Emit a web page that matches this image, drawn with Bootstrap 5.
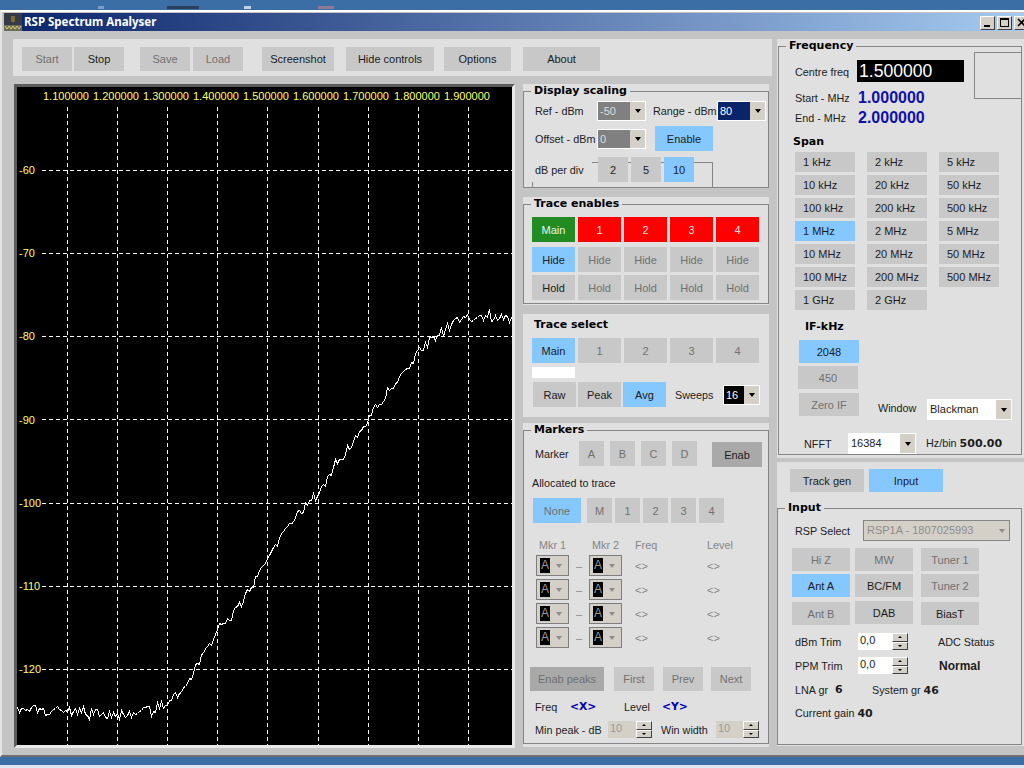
<!DOCTYPE html>
<html lang="en">
<head>
<meta charset="utf-8">
<title>RSP Spectrum Analyser</title>
<link href="https://cdn.jsdelivr.net/npm/bootstrap@5.3.0/dist/css/bootstrap.min.css" rel="stylesheet">
<style>
html,body{margin:0;height:768px;overflow:hidden}
body{background:#3a6ea5;font:11px/14px "Liberation Sans",Arial,sans-serif;color:#1c1c1c}
.deskstrip{height:10px}
.dk{height:3px;margin-top:6px}
.dk1{margin-left:98px;width:6px;background:#7f9fc4}
.dk2{margin-left:63px;width:32px;background:#2a3f5c}
.dk3{margin-left:45px;width:7px;background:#c3d3e4}
.dk4{margin-left:67px;width:16px;background:#8f7a90}
.winbox{height:747px;background:#c4c4c4;border-top:2px solid #fff;border-bottom:2px solid #6f6f6f;border-left:2px solid #e4e4e4;padding-top:1px}
.tbarhead{height:18px;margin-left:2px;background:linear-gradient(90deg,#0a246a,#a6caf0);color:#fff;font:bold 11.5px/18px "Noto Sans",sans-serif;overflow:hidden}
.appic{width:18px;height:18px;margin-right:2px;flex:none}
.wb{width:15px;height:14px;background:#d4d0c8;border:1px solid;border-color:#fff #404040 #404040 #fff;flex:none;margin-right:2px;position:relative}
.wbmin::after{content:"";position:absolute;left:3px;bottom:2px;width:6px;height:2px;background:#000}
.wbmax::after{content:"";position:absolute;left:2px;top:1px;width:9px;height:9px;border:1px solid #000;border-top-width:2px}
.wins{padding-top:1px;margin-right:-7px}
.maincols{padding-top:8px}
.lcol{width:759px;margin-left:11px;flex:none}
.rcol{width:247px;margin-left:5px;flex:none}
.pane{background:#e0e0e0;display:flow-root}
.tool{height:37px;padding:8px 0 0 9px}
.chartbox{width:501px;height:664px;margin-left:1px;border:3px solid;border-color:#5c5c5c #e8e8e8 #e8e8e8 #5c5c5c;background:#000;flex:none}
.chartbox svg{display:block}
.midc{width:246px;margin-left:8px;flex:none}
.gb{border:1px solid #858585;padding:0;margin:0;min-width:0}
.gb>legend{float:none;width:auto;margin:0 0 0 7px;padding:0 3px;font:bold 11px/14px "DejaVu Sans",sans-serif;color:#000}
.ttl{font:bold 11px/14px "DejaVu Sans",sans-serif;color:#000}
.btn.kb{--bs-btn-padding-x:0;--bs-btn-padding-y:0;--bs-btn-border-width:0;--bs-btn-border-radius:0;--bs-btn-font-size:11px;--bs-btn-line-height:14px;--bs-btn-font-family:"Liberation Sans",Arial,sans-serif;--bs-btn-bg:#c8c8c8;--bs-btn-color:#1c1c1c;--bs-btn-hover-bg:#c8c8c8;--bs-btn-hover-color:#1c1c1c;flex:none;display:block}
.btn.kb.dim{--bs-btn-color:#707070;--bs-btn-hover-color:#707070}
.btn.kb.sky{--bs-btn-bg:#85c8ff;--bs-btn-hover-bg:#85c8ff}
.btn.kb.dark{--bs-btn-bg:#a9a9a9;--bs-btn-hover-bg:#a9a9a9}
.btn.kb.grn{--bs-btn-bg:#228b22;--bs-btn-hover-bg:#228b22;--bs-btn-color:#eaf5ea;--bs-btn-hover-color:#eaf5ea}
.btn.kb.redb{--bs-btn-bg:#ff0000;--bs-btn-hover-bg:#ff0000;--bs-btn-color:#ffe0e0;--bs-btn-hover-color:#ffe0e0}
.btn.kb.tl{text-align:left;padding-left:8px}
.h17{height:17px}.h20{height:20px}.h21{height:21px}.h23{height:23px}.h24{height:24px}.h25{height:25px}
.h14{height:14px}.h16{height:16px}
.w25{width:25px}.w30{width:30px}.w35{width:35px}.w37{width:37px}.w38{width:38px}.w40{width:40px}.w43{width:43px}.w44{width:44px}.w48{width:48px}.w49{width:49px}.w50{width:50px}.w54{width:54px}.w55{width:55px}.w58{width:58px}.w60{width:60px}.w62{width:62px}.w63{width:63px}.w64{width:64px}.w67{width:67px}.w68{width:68px}.w72{width:72px}.w73{width:73px}.w74{width:74px}.w77{width:77px}.w85{width:85px}.w88{width:88px}.w107{width:107px}.w147{width:147px}
.l1{margin-left:1px}.l2{margin-left:2px}.l3{margin-left:3px}.l5{margin-left:5px}.l6{margin-left:6px}.l7{margin-left:7px}.l8{margin-left:8px}.l9{margin-left:9px}.l10{margin-left:10px}.l11{margin-left:11px}.l12{margin-left:12px}.l13{margin-left:13px}.l14{margin-left:14px}.l15{margin-left:15px}.l16{margin-left:16px}.l17{margin-left:17px}.l19{margin-left:19px}.l20{margin-left:20px}.l25{margin-left:25px}.l26{margin-left:26px}.l30{margin-left:30px}.l31{margin-left:31px}
.t1{margin-top:1px}.t2{margin-top:2px}.t3{margin-top:3px}.t4{margin-top:4px}.t5{margin-top:5px}.t6{margin-top:6px}.t7{margin-top:7px}.t8{margin-top:8px}.t9{margin-top:9px}.t10{margin-top:10px}.t13{margin-top:13px}.t15{margin-top:15px}.t19{margin-top:19px}
.ht104{height:104px}.ht107{height:107px}.ht103{height:103px}.ht324{height:324px}.ht321{height:321px}
.pt108{height:108px}
.fq419{height:419px}.fq416{height:416px}.in284{height:284px}.in244{height:244px}
.fl{width:244px;margin-left:1px}
.fin{width:245px}
.lb{flex:none;white-space:nowrap;font-size:10.8px}
.mut{color:#858585}
.combo{border:1px solid #fff;display:flex;flex:none;background:#d4d0c8}
.cf{flex:1;padding-left:2px;line-height:18px;color:#fff;overflow:hidden;white-space:nowrap}
.cf.gy{background:#808080;color:#dedede}
.cf.nv{background:#0a246a}
.cf.bk{background:#000}
.cf.wt{background:#fff;color:#1c1c1c}
.ca{width:15px;flex:none;display:flex;align-items:center;justify-content:center;background:#d4d0c8}
.ca::after{content:"";border:3.5px solid transparent;border-top:4px solid #000;border-bottom:0}
.combo.rsp{border-color:#858585}
.rsp .cf{color:#8c8c8c;background:#d4d0c8;line-height:19px;padding-left:3px}
.rsp .ca::after{border-top-color:#8c8c8c}
.mk{border:1px solid #7d7d7d;background:#d4d0c8;width:33px;height:21px;display:flex;align-items:center;padding-left:3px}
.mkf{width:10px;height:15px;background:#000;color:#9a9a9a;line-height:15px;text-align:center;font-size:12px}
.mk .ca{flex:1;background:none}
.mk .ca::after{border-top-color:#8c8c8c}
.inn{position:absolute;z-index:0;border:0 solid #858585}
.boxl{left:68px;top:5px;width:121px;height:26px;border-width:1px 1px 0 0}
.boxs{left:8px;top:25px;width:1px;height:6px;background:#858585}
.rel{position:relative}
.rel>.btn,.rel>.lb{position:relative;z-index:1}
.wht{width:43px;height:11px;background:#fff}
.lb.blk{font-size:17.6px;line-height:22px;background:#000;color:#fff;padding-left:2px}
.mhz{font:bold 16px/16px "Liberation Sans",Arial,sans-serif;color:#1010a8}
.cbx{width:48px;height:47px;border:1px solid #858585;margin-top:-1px;margin-right:-1px;flex:none}
.spang{display:grid;grid-template-columns:repeat(3,60px);grid-auto-rows:20px;column-gap:12px;row-gap:3px}
.tgrid{display:grid;grid-template-columns:repeat(5,43px);grid-auto-rows:25px;column-gap:3px;row-gap:5px}
.mgrid{display:grid;grid-template-columns:33px 20px 33px 13px 72px 50px;grid-template-rows:14px repeat(4,21px);row-gap:3px;align-items:center}
.ctr{text-align:center}
.spin{display:flex;flex:none}
.spf{flex:1;background:#d4d0c8;color:#9a9a9a;padding-left:2px;line-height:15px}
.spf.on{background:#fff;color:#1c1c1c}
.spb{width:16px;display:flex;flex-direction:column;flex:none}
.spb>i{flex:1;background:#d4d0c8;border:1px solid;border-color:#fff #404040 #404040 #fff;display:flex;align-items:center;justify-content:center}
.spb>i::after{content:"";border:2px solid transparent}
.spb>i.u::after{border-bottom:2px solid #000;border-top:0}
.spb>i.d::after{border-top:2px solid #000;border-bottom:0}
.blu{color:#0000b4;font-weight:bold;font-family:"DejaVu Sans",sans-serif}
.bo{font-weight:bold;font-size:12px}
.boo{font-weight:bold;font-family:"DejaVu Sans",sans-serif;font-size:11px}
.foot{height:8px}
.footb{height:3px;background:#dfe6ee}
</style>
</head>
<body>
<div class="deskstrip d-flex">
  <span class="dk dk1"></span><span class="dk dk2"></span><span class="dk dk3"></span><span class="dk dk4"></span>
</div>
<div class="winbox">
  <div class="tbarhead d-flex align-items-center">
    <svg class="appic" viewBox="0 0 18 18"><rect width="18" height="18" fill="#353a44"/><rect x="7" y="3" width="4" height="6" fill="#7b6a3a"/><rect y="12" width="18" height="6" fill="#6c6c58"/><path d="M1 13l2 3 2-3 2 3 2-3 2 3 2-3 2 3 2-3" fill="none" stroke="#d8cc70"/></svg>
    <span class="flex-grow-1">RSP Spectrum Analyser</span>
    <span class="d-flex wins"><span class="wb wbmin"></span><span class="wb wbmax"></span><svg class="wb" viewBox="0 0 13 12"><path d="M3 2l7 7M10 2l-7 7" stroke="#000" stroke-width="1.6"/></svg></span>
  </div>
  <div class="maincols d-flex">
    <div class="lcol">
      <div class="pane tool d-flex">
        <button class="btn kb dim w50 h24">Start</button>
        <button class="btn kb w50 h24 l2">Stop</button>
        <button class="btn kb dim w50 h24 l16">Save</button>
        <button class="btn kb dim w50 h24 l3">Load</button>
        <button class="btn kb w72 h24 l19">Screenshot</button>
        <button class="btn kb w88 h24 l12">Hide controls</button>
        <button class="btn kb w67 h24 l10">Options</button>
        <button class="btn kb w77 h24 l12">About</button>
      </div>
      <div class="d-flex t8">
        <div class="chartbox">
          <svg width="495" height="658" viewBox="17 87 495 658" font-family="Liberation Sans" font-size="11" fill="#ffff70">
            <g id="gridv" stroke="#fff" stroke-dasharray="4 3" shape-rendering="crispEdges"></g>
            <g id="gridh" stroke="#fff" stroke-dasharray="4 3" shape-rendering="crispEdges"></g>
            <text x="43" y="100">1.100000</text><text x="93" y="100">1.200000</text><text x="143" y="100">1.300000</text><text x="193" y="100">1.400000</text><text x="243" y="100">1.500000</text><text x="293" y="100">1.600000</text><text x="343" y="100">1.700000</text><text x="394" y="100">1.800000</text><text x="444" y="100">1.900000</text>
            <text x="19" y="174">-60</text><text x="19" y="257">-70</text><text x="19" y="340">-80</text><text x="19" y="424">-90</text><text x="19" y="507">-100</text><text x="19" y="590">-110</text><text x="19" y="673">-120</text>
            <path id="trace" fill="none" stroke="#fff" stroke-width="1" shape-rendering="crispEdges"></path>
          </svg>
        </div>
        <div class="midc">
          <div class="pane ht104">
            <fieldset class="gb ht104">
              <legend>Display scaling</legend>
              <div class="d-flex align-items-center t3 l11 h20">
                <span class="lb w62">Ref - dBm</span>
                <div class="combo w49 h20"><span class="cf gy">-50</span><span class="ca"></span></div>
                <span class="lb l7 w64">Range - dBm</span>
                <div class="combo w49 h20"><span class="cf nv">80</span><span class="ca"></span></div>
              </div>
              <div class="d-flex align-items-center t5 l11 h25">
                <span class="lb w62">Offset - dBm</span>
                <div class="combo w49 h20"><span class="cf gy">0</span><span class="ca"></span></div>
                <button class="btn kb sky w58 h25 l9">Enable</button>
              </div>
              <div class="d-flex align-items-center t6 rel h25">
                <span class="inn boxl"></span><span class="inn boxs"></span>
                <span class="lb l11 w63">dB per div</span>
                <button class="btn kb w30 h25">2</button>
                <button class="btn kb w30 h25 l3">5</button>
                <button class="btn kb sky w30 h25 l3">10</button>
              </div>
            </fieldset>
          </div>
          <div class="pane pt108 t9">
            <fieldset class="gb ht107">
              <legend>Trace enables</legend>
              <div class="tgrid t6 l8">
                <button class="btn kb grn">Main</button><button class="btn kb redb">1</button><button class="btn kb redb">2</button><button class="btn kb redb">3</button><button class="btn kb redb">4</button>
                <button class="btn kb sky">Hide</button><button class="btn kb dim">Hide</button><button class="btn kb dim">Hide</button><button class="btn kb dim">Hide</button><button class="btn kb dim">Hide</button>
              </div>
              <div class="tgrid t3 l8">
                <button class="btn kb">Hold</button><button class="btn kb dim">Hold</button><button class="btn kb dim">Hold</button><button class="btn kb dim">Hold</button><button class="btn kb dim">Hold</button>
              </div>
            </fieldset>
          </div>
          <div class="pane ht103 t9">
            <div class="ttl l11 h14 pt-1">Trace select</div>
            <div class="d-flex l9 t10">
              <button class="btn kb sky w43 h25">Main</button><button class="btn kb dim w43 h25 l3">1</button><button class="btn kb dim w43 h25 l3">2</button><button class="btn kb dim w43 h25 l3">3</button><button class="btn kb dim w43 h25 l3">4</button>
            </div>
            <div class="wht l9 t4"></div>
            <div class="d-flex align-items-center t4 l9 h25">
              <button class="btn kb w43 h25 l1">Raw</button><button class="btn kb w43 h25 l2">Peak</button><button class="btn kb sky w43 h25 l2">Avg</button>
              <span class="lb l9 w48">Sweeps</span>
              <div class="combo w37 h20"><span class="cf bk">16</span><span class="ca"></span></div>
            </div>
          </div>
          <div class="pane ht324 t6">
            <fieldset class="gb ht321">
              <legend>Markers</legend>
              <div class="d-flex t4 align-items-start">
                <span class="lb l11 w44 t6">Marker</span>
                <button class="btn kb dim w25 h25">A</button><button class="btn kb dim w25 h25 l6">B</button><button class="btn kb dim w25 h25 l6">C</button><button class="btn kb dim w25 h25 l6">D</button>
                <button class="btn kb dark w50 h25 l15 t1">Enab</button>
              </div>
              <div class="lb l8 t9 h14">Allocated to trace</div>
              <div class="d-flex l9 t8">
                <button class="btn kb sky dim w48 h25">None</button><button class="btn kb dim w25 h25 l6">M</button><button class="btn kb dim w25 h25 l3">1</button><button class="btn kb dim w25 h25 l3">2</button><button class="btn kb dim w25 h25 l3">3</button><button class="btn kb dim w25 h25 l3">4</button>
              </div>
              <div class="mgrid mut l12 t15">
                <span class="lb l3">Mkr 1</span><span></span><span class="lb l3">Mkr 2</span><span></span><span class="lb">Freq</span><span class="lb">Level</span>
                <span class="mk"><span class="mkf">A</span><span class="ca"></span></span><span class="ctr">–</span><span class="mk"><span class="mkf">A</span><span class="ca"></span></span><span></span><span>&lt;&gt;</span><span>&lt;&gt;</span>
                <span class="mk"><span class="mkf">A</span><span class="ca"></span></span><span class="ctr">–</span><span class="mk"><span class="mkf">A</span><span class="ca"></span></span><span></span><span>&lt;&gt;</span><span>&lt;&gt;</span>
                <span class="mk"><span class="mkf">A</span><span class="ca"></span></span><span class="ctr">–</span><span class="mk"><span class="mkf">A</span><span class="ca"></span></span><span></span><span>&lt;&gt;</span><span>&lt;&gt;</span>
                <span class="mk"><span class="mkf">A</span><span class="ca"></span></span><span class="ctr">–</span><span class="mk"><span class="mkf">A</span><span class="ca"></span></span><span></span><span>&lt;&gt;</span><span>&lt;&gt;</span>
              </div>
              <div class="d-flex l6 t19">
                <button class="btn kb dark dim w74 h24">Enab peaks</button><button class="btn kb dim w40 h24 l10">First</button><button class="btn kb dim w40 h24 l9">Prev</button><button class="btn kb dim w40 h24 l8">Next</button>
              </div>
              <div class="d-flex l11 t9 h14">
                <span class="lb w35">Freq</span><span class="lb w54 blu">&lt;X&gt;</span><span class="lb w38">Level</span><span class="lb blu">&lt;Y&gt;</span>
              </div>
              <div class="d-flex align-items-center t7 l11 h17">
                <span class="lb w73">Min peak - dB</span>
                <div class="spin w44 h17"><span class="spf">10</span><span class="spb"><i class="u"></i><i class="d"></i></span></div>
                <span class="lb l9 w55">Win width</span>
                <div class="spin w43 h17"><span class="spf">10</span><span class="spb"><i class="u"></i><i class="d"></i></span></div>
              </div>
            </fieldset>
          </div>
        </div>
      </div>
    </div>
    <div class="rcol">
      <div class="pane fq419">
        <fieldset class="gb fq416 fl">
          <legend>Frequency</legend>
          <div class="d-flex justify-content-between align-items-start">
            <div class="l16">
              <div class="d-flex align-items-center t7 h21">
                <span class="lb w62 t3">Centre freq</span><span class="blk w107 lb">1.500000</span>
              </div>
              <div class="d-flex align-items-center t9 h16"><span class="lb w63">Start - MHz</span><span class="mhz">1.000000</span></div>
              <div class="d-flex align-items-center t4 h16"><span class="lb w63">End - MHz</span><span class="mhz">2.000000</span></div>
            </div>
            <div class="cbx"></div>
          </div>
          <div class="ttl l14 t9 h14">Span</div>
          <div class="spang l16 t3">
            <button class="btn kb tl">1 kHz</button><button class="btn kb tl">2 kHz</button><button class="btn kb tl">5 kHz</button>
            <button class="btn kb tl">10 kHz</button><button class="btn kb tl">20 kHz</button><button class="btn kb tl">50 kHz</button>
            <button class="btn kb tl">100 kHz</button><button class="btn kb tl">200 kHz</button><button class="btn kb tl">500 kHz</button>
            <button class="btn kb tl sky">1 MHz</button><button class="btn kb tl">2 MHz</button><button class="btn kb tl">5 MHz</button>
            <button class="btn kb tl">10 MHz</button><button class="btn kb tl">20 MHz</button><button class="btn kb tl">50 MHz</button>
            <button class="btn kb tl">100 MHz</button><button class="btn kb tl">200 MHz</button><button class="btn kb tl">500 MHz</button>
            <button class="btn kb tl">1 GHz</button><button class="btn kb tl">2 GHz</button>
          </div>
          <div class="ttl l26 t10 h14">IF-kHz</div>
          <button class="btn kb sky w60 h23 l20 t6">2048</button>
          <button class="btn kb dim w60 h23 l19 t3">450</button>
          <div class="d-flex align-items-start t4">
            <button class="btn kb dim w60 h23 l20">Zero IF</button>
            <span class="lb l19 w49 t8">Window</span>
            <div class="combo w85 h21 t6"><span class="cf wt">Blackman</span><span class="ca"></span></div>
          </div>
          <div class="d-flex align-items-center t13 h21">
            <span class="lb l25 w44">NFFT</span>
            <div class="combo w68 h21"><span class="cf wt">16384</span><span class="ca"></span></div>
            <span class="lb l10">Hz/bin <b class="boo">500.00</b></span>
          </div>
        </fieldset>
      </div>
      <div class="pane in284 t4">
        <div class="d-flex l13 t7">
          <button class="btn kb w74 h23">Track gen</button><button class="btn kb sky w74 h23 l5">Input</button>
        </div>
        <fieldset class="gb in244 fin t9">
          <legend>Input</legend>
          <div class="d-flex align-items-center l17 t5">
            <span class="lb w68">RSP Select</span>
            <div class="combo rsp w147 h21"><span class="cf">RSP1A - 1807025993</span><span class="ca"></span></div>
          </div>
          <div class="d-flex l14 t7">
            <button class="btn kb dim w58 h23">Hi Z</button><button class="btn kb dim w58 h23 l5">MW</button><button class="btn kb dim w58 h23 l8">Tuner 1</button>
          </div>
          <div class="d-flex l14 t3">
            <button class="btn kb sky w58 h23">Ant A</button><button class="btn kb w58 h23 l5">BC/FM</button><button class="btn kb dim w58 h23 l8">Tuner 2</button>
          </div>
          <div class="d-flex l14 t4 align-items-start">
            <button class="btn kb dim w58 h23 t1">Ant B</button><button class="btn kb w58 h23 l5">DAB</button><button class="btn kb w58 h23 l8 t1">BiasT</button>
          </div>
          <div class="d-flex align-items-center l17 t8 h17">
            <span class="lb w63">dBm Trim</span>
            <div class="spin w50 h17"><span class="spf on">0,0</span><span class="spb"><i class="u"></i><i class="d"></i></span></div>
            <span class="lb l30">ADC Status</span>
          </div>
          <div class="d-flex align-items-center l17 t7 h17">
            <span class="lb w63">PPM Trim</span>
            <div class="spin w50 h17"><span class="spf on">0,0</span><span class="spb"><i class="u"></i><i class="d"></i></span></div>
            <span class="lb l31 bo">Normal</span>
          </div>
          <div class="d-flex l17 t9 h14">
            <span class="lb w40">LNA gr</span><span class="lb w37 boo">6</span><span class="lb">System gr <b class="boo">46</b></span>
          </div>
          <div class="lb l17 t9 h14">Current gain <b class="boo">40</b></div>
        </fieldset>
      </div>
    </div>
  </div>
</div>
<div class="foot"></div>
<div class="footb"></div>
<script>
(function(){
  var NS="http://www.w3.org/2000/svg";
  function dash(g,x1,y1,x2,y2){var l=document.createElementNS(NS,"line");l.setAttribute("x1",x1);l.setAttribute("y1",y1);l.setAttribute("x2",x2);l.setAttribute("y2",y2);g.appendChild(l);}
  var gv=document.getElementById("gridv"),gh=document.getElementById("gridh");
  [67,117,167,217,267,318,368,418,468].forEach(function(x){dash(gv,x+.5,107,x+.5,746);});
  [170,253,336,419,503,586,669].forEach(function(y){dash(gh,42,y+.5,512,y+.5);});
  var pts=[[17,709],[60,710],[100,712],[117,716],[143,712],[167,702],[183,688],[200,660],[217,633],[243,600],[268,558],[293,518],[318,492],[343,455],[368,417],[393,385],[418,353],[430,340],[442,330],[455,322],[468,317],[490,316],[512,318]];
  var s=12345;
  function r(){s=(s*48271)%2147483647;return s/2147483647;}
  function base(x){for(var k=1;k<pts.length;k++){if(x<=pts[k][0]){var a=pts[k-1],b=pts[k];return a[1]+(b[1]-a[1])*(x-a[0])/(b[0]-a[0]);}}return 318;}
  var d="";
  for(var x=17;x<=512;x+=2){var n=(r()-.5)*10;if(r()>.92)n*=1.6;var y=Math.round(base(x)+n)+.5;d+=(d?"L":"M")+(x+.5)+" "+y;}
  document.getElementById("trace").setAttribute("d",d);
})();
</script>
<script src="https://cdn.jsdelivr.net/npm/bootstrap@5.3.0/dist/js/bootstrap.bundle.min.js"></script>
</body>
</html>
